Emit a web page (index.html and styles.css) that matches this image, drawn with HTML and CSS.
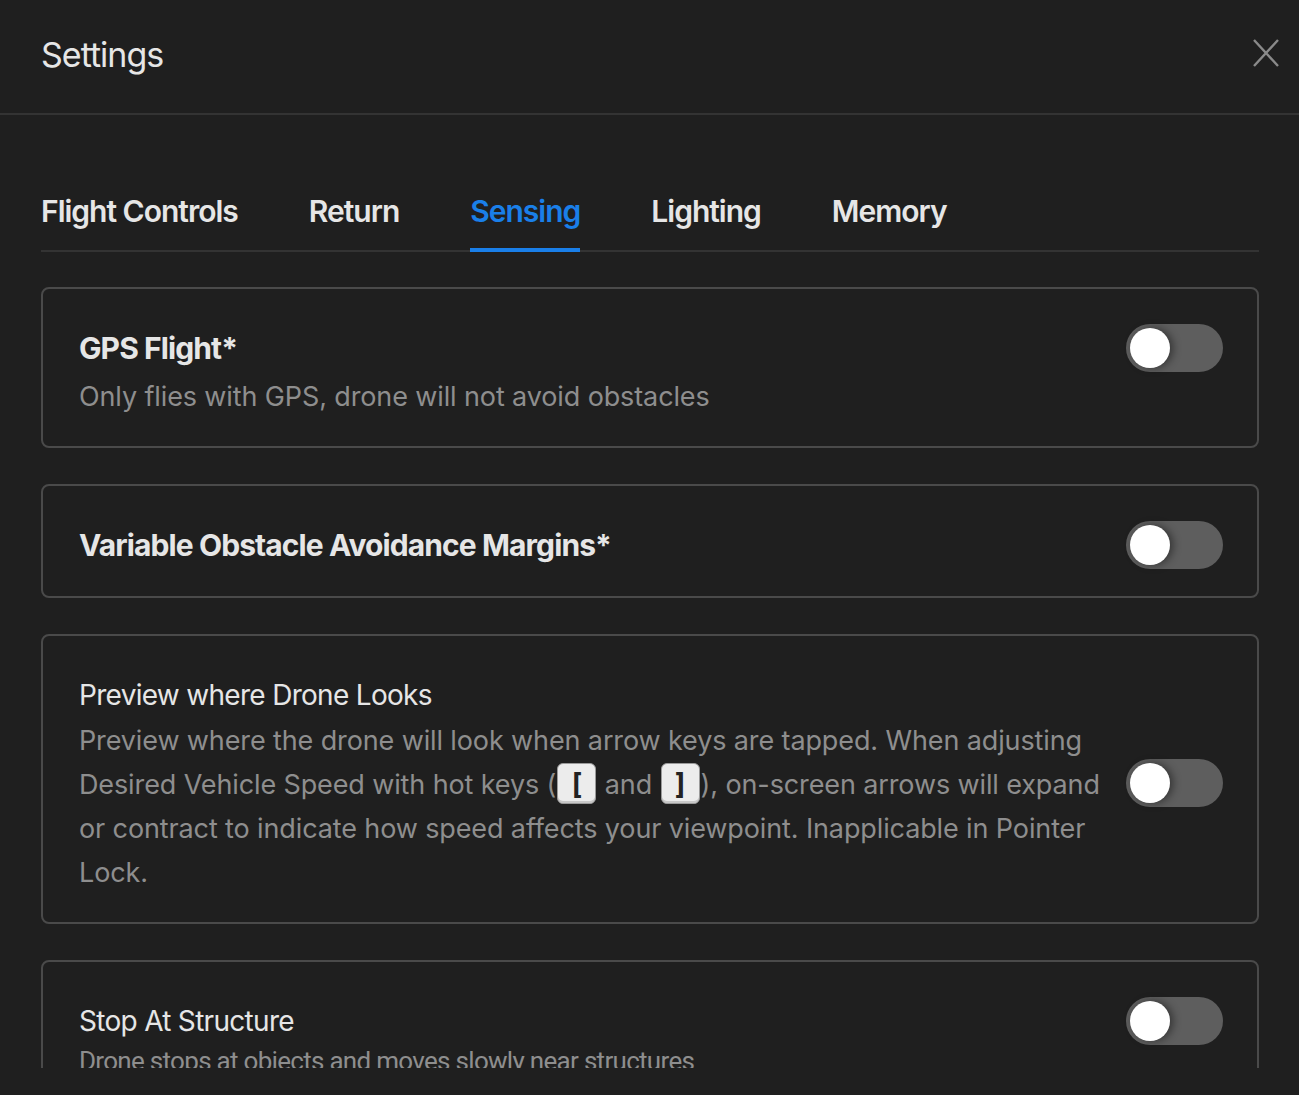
FILE: index.html
```html
<!DOCTYPE html>
<html>
  <head>
    <title>Settings</title>
    <meta charset="utf-8">
    <meta name="viewport" content="width=device-width, initial-scale=1">
    <link rel="stylesheet" href="styles.css">
  </head>

  <body>
    <div class="container">

      <div class="header">
        <h1 class="title">Settings</h1>
        <button class="close" aria-label="Close">
          <svg width="26" height="28" viewBox="0 0 26 28">
            <path d="M1 1 L25 27 M25 1 L1 27" stroke="#8a8a8a" stroke-width="2.4" fill="none"/>
          </svg>
        </button>
      </div>

      <div class="tabs">
        <div class="tab">Flight Controls</div>
        <div class="tab">Return</div>
        <div class="tab active">Sensing</div>
        <div class="tab">Lighting</div>
        <div class="tab">Memory</div>
      </div>

      <div class="options">

        <div class="option">
          <div class="option-head">
            <div class="option-title bold">GPS Flight*</div>
            <div class="toggle"><span class="knob"></span></div>
          </div>
          <div class="option-desc">Only flies with GPS, drone will not avoid obstacles</div>
        </div>

        <div class="option row">
          <div class="option-text">
            <div class="option-title bold">Variable Obstacle Avoidance Margins*</div>
          </div>
          <div class="toggle"><span class="knob"></span></div>
        </div>

        <div class="option row">
          <div class="option-text">
            <div class="option-title">Preview where Drone Looks</div>
            <div class="option-desc long">Preview where the drone will look when arrow keys are tapped. When adjusting Desired Vehicle Speed with hot keys (<kbd>[</kbd> and <kbd>]</kbd>), on-screen arrows will expand or contract to indicate how speed affects your viewpoint. Inapplicable in Pointer Lock.</div>
          </div>
          <div class="toggle"><span class="knob"></span></div>
        </div>

        <div class="option">
          <div class="option-head">
            <div class="option-title">Stop At Structure</div>
            <div class="toggle"><span class="knob"></span></div>
          </div>
          <div class="option-desc tight">Drone stops at objects and moves slowly near structures</div>
        </div>

      </div>
    </div>
  </body>
</html>
```

FILE: styles.css
```css
html, body {
  margin: 0;
  height: 100vh;
  overflow: hidden;
  background-color: #1f1f1f;
}

* {
  margin: 0;
  padding: 0;
  box-sizing: border-box;
  font-family: Inter, "Noto Sans", sans-serif;
}

.container {
  height: 100%;
  width: 100vw;
}

.header {
  height: 115px;
  display: flex;
  align-items: center;
  justify-content: space-between;
  padding: 0 20px 4px 41px;
  border-bottom: 2px solid #333;
}

.title {
  color: #e6e6e6;
  font-size: 34px;
  font-weight: 400;
  letter-spacing: -1px;
}

.close {
  background: none;
  border: 0;
  display: flex;
  margin-top: -4px;
}

.tabs {
  display: flex;
  gap: 71px;
  margin: 76px 40px 0 41px;
  border-bottom: 2px solid #333;
}

.tab {
  color: #e6e6e6;
  font-size: 30px;
  font-weight: 600;
  line-height: 40px;
  letter-spacing: -1px;
  padding-bottom: 17px;
  border-bottom: 4px solid transparent;
  margin-bottom: -2px;
}

.tab.active {
  color: #1a7fe9;
  border-bottom-color: #1a7fe9;
}

.options {
  height: 816px;
  overflow: hidden;
  padding: 35px 40px 0 41px;
  display: flex;
  flex-direction: column;
  gap: 36px;
}

.option {
  flex-shrink: 0;
  border: 2px solid #4a4a4a;
  border-radius: 8px;
  padding: 35px 34px 27px 36px;
}

.option.row {
  display: flex;
  align-items: center;
}

.option-head {
  display: flex;
  align-items: center;
  justify-content: space-between;
}

.option-text {
  flex: 1;
}

.option-title {
  color: #e6e6e6;
  font-size: 28px;
  line-height: 48px;
  letter-spacing: -0.7px;
}

.option-title.bold {
  font-size: 30px;
  font-weight: 700;
  letter-spacing: -0.9px;
}

.option-desc {
  color: #8e8e8e;
  font-size: 27px;
  line-height: 44px;
  letter-spacing: -0.12px;
  margin-top: 3px;
}

.option-desc.long {
  margin-top: 0;
  padding-right: 2px;
}

.option-desc.tight {
  margin-top: -6px;
  font-family: Roboto, Inter, sans-serif;
  font-size: 26px;
  letter-spacing: -0.7px;
}

kbd {
  display: inline-block;
  width: 39px;
  height: 41px;
  line-height: 41px;
  text-align: center;
  margin: 0 1px;
  background-color: #ececec;
  border: 1px solid #9a9a9a;
  border-radius: 6px;
  box-shadow: inset 0 -2px 0 #c8c8c8;
  color: #222;
  font-size: 28px;
  font-weight: 700;
}

.toggle {
  flex-shrink: 0;
  width: 97px;
  height: 48px;
  border-radius: 24px;
  background-color: #5e5e5e;
  padding: 4px;
  margin-left: 24px;
}

.knob {
  display: block;
  width: 40px;
  height: 40px;
  border-radius: 50%;
  background-color: #fff;
  box-shadow: 3px 0 8px rgba(0, 0, 0, 0.45);
}
```
